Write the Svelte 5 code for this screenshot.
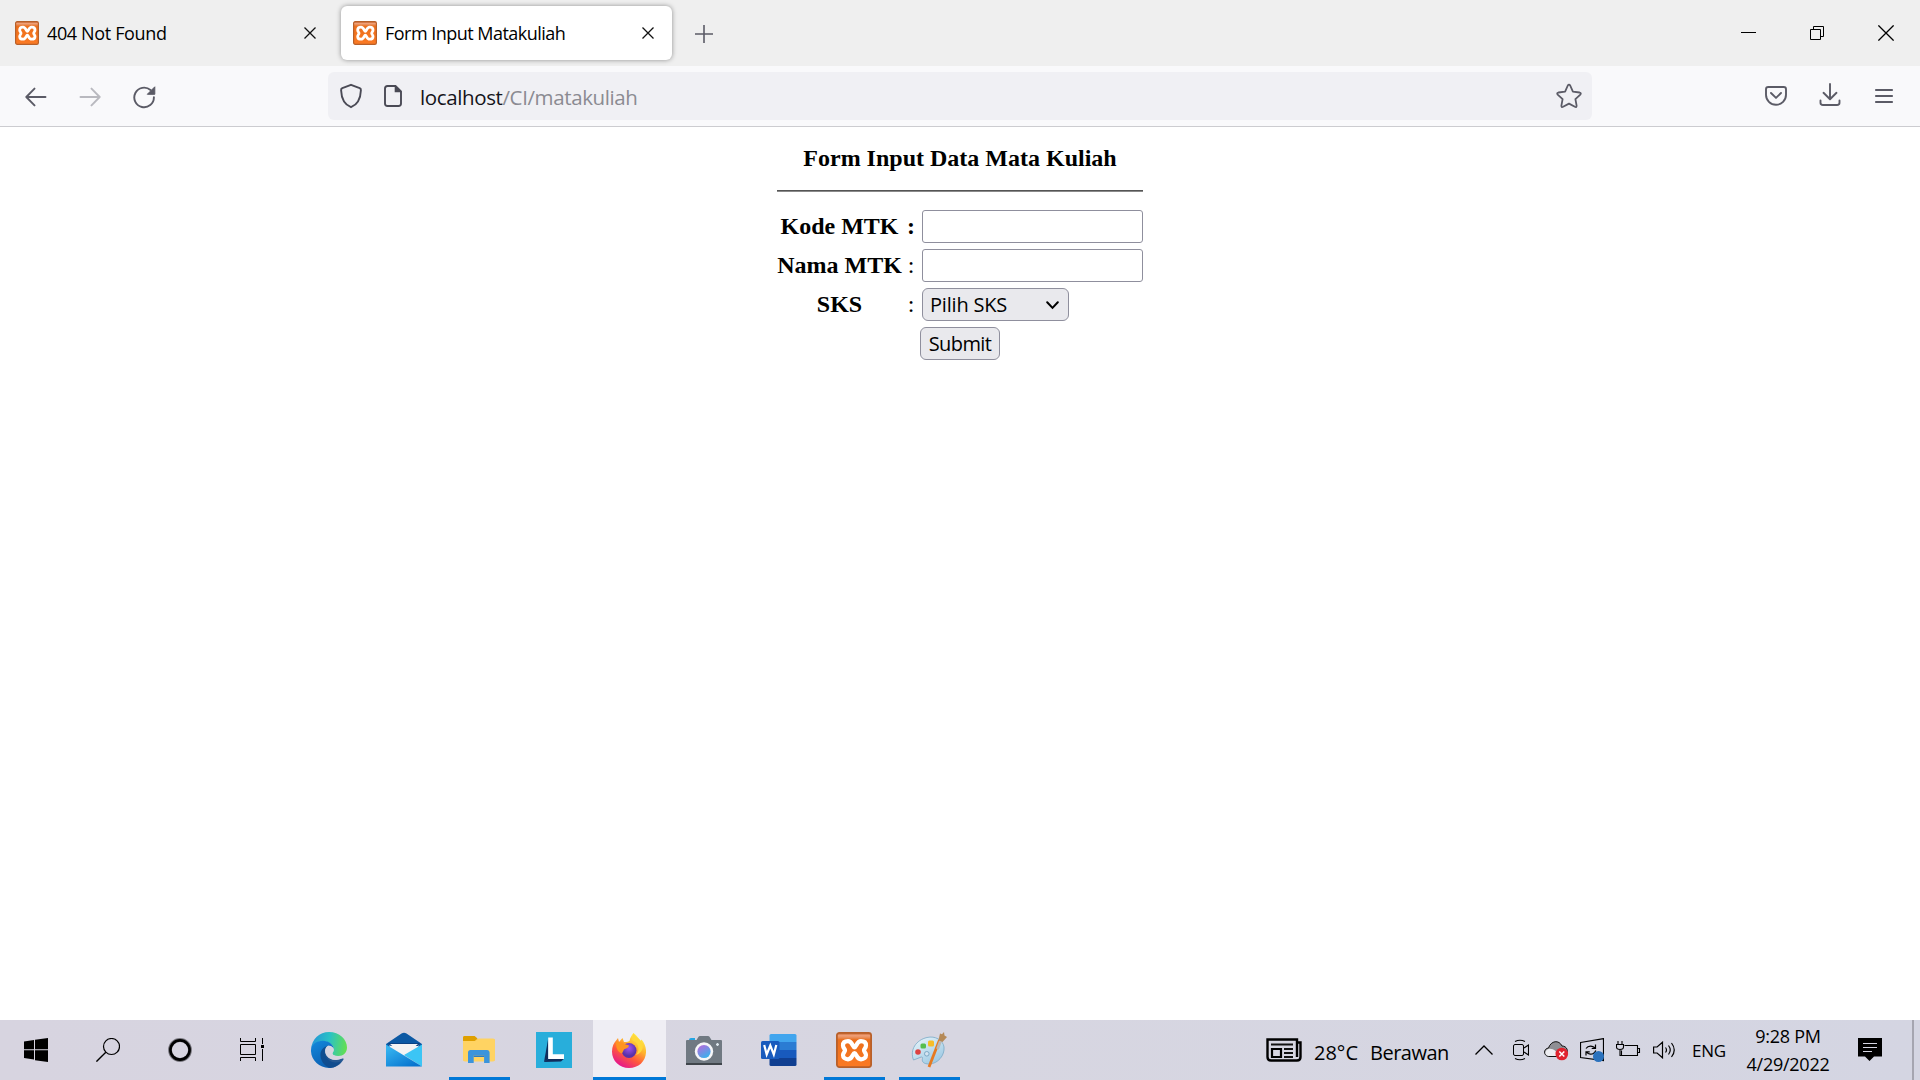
<script>
  let kode = $state('');
  let nama = $state('');
</script>

{#snippet xampp(size, id)}
  <svg width={size} height={size} viewBox="0 0 36 36">
    <defs>
      <linearGradient id={id} x1="0" y1="0" x2="0" y2="1">
        <stop offset="0" stop-color="#c8622a" />
        <stop offset=".08" stop-color="#f0a078" />
        <stop offset=".15" stop-color="#e8884e" />
        <stop offset=".2" stop-color="#ec6f1c" />
        <stop offset="1" stop-color="#fb7a24" />
      </linearGradient>
    </defs>
    <rect x=".9" y=".9" width="34.2" height="34.2" rx="2.5" fill="url(#{id})" stroke="#b8602a" stroke-width="1.8" />
    <path
      d="M18.500 15.400C16.600 15.400 16.500 9.200 12 9.200 8.500 9.200 7 11.200 7 13.500 7 16 9 16.700 9 18.300 9 19.900 7 20.700 7 23.100 7 25.400 8.700 27.300 12 27.300 16.500 27.300 16.600 21.200 18.500 21.200S20.500 27.300 25 27.300C28.300 27.300 30 25.400 30 23.100 30 20.700 28 19.900 28 18.300 28 16.700 30 16 30 13.500 30 11.200 28.500 9.200 25 9.200 20.500 9.200 20.400 15.400 18.500 15.400z"
      fill="none" stroke="#fff" stroke-width="4.200" stroke-linejoin="round" />
  </svg>
{/snippet}

{#snippet cross()}
  <svg width="12" height="12" viewBox="0 0 12 12"><path d="M.5.5l11 11M11.500.5l-11 11" stroke="#111" stroke-width="1.300" /></svg>
{/snippet}

<div class="screen">
  <header class="tabs">
    <div class="tab">
      {@render xampp(24, 'xa')}
      <span class="tab-title first">404 Not Found</span>
      {@render cross()}
    </div>
    <div class="tab active">
      {@render xampp(24, 'xb')}
      <span class="tab-title">Form Input Matakuliah</span>
      {@render cross()}
    </div>
    <svg class="plus" width="18" height="18" viewBox="0 0 18 18"><path d="M9 0v18M0 9h18" stroke="#5b5b66" stroke-width="1.600" /></svg>
    <div class="window-buttons">
      <svg width="16" height="16" viewBox="0 0 16 16"><path d="M0 7.500h15" stroke="#000" /></svg>
      <svg width="14" height="14" viewBox="0 0 14 14"><path d="M.5 3.500h10v10H.5zM3.500 3.500v-3h10v10h-3" fill="none" stroke="#000" /></svg>
      <svg width="16" height="16" viewBox="0 0 16 16"><path d="M.4.4l15.200 15.200M15.600.4L.4 15.600" stroke="#000" stroke-width="1.300" /></svg>
    </div>
  </header>

  <nav class="toolbar">
    <div class="nav-buttons">
      <svg width="22" height="20" viewBox="0 0 22 20"><path d="M20.500 10H1.800M9.500 1.600L1.300 10l8.200 8.400" fill="none" stroke="#5b5b66" stroke-width="1.900" stroke-linecap="round" stroke-linejoin="round" /></svg>
      <svg width="22" height="20" viewBox="0 0 22 20"><path d="M1.500 10h18.700M12.500 1.600l8.200 8.400-8.200 8.400" fill="none" stroke="#b9b9bf" stroke-width="1.900" stroke-linecap="round" stroke-linejoin="round" /></svg>
      <svg width="23" height="24" viewBox="0 0 23 24"><path d="M20.900 12.300A9.800 9.800 0 1 1 17.500 5" fill="none" stroke="#5b5b66" stroke-width="1.900" stroke-linecap="round" /><path d="M21.800 1.800v7.500h-7.500z" fill="#5b5b66" stroke="#5b5b66" stroke-linejoin="round" /></svg>
    </div>
    <div class="urlbar">
      <svg width="24" height="26" viewBox="0 0 24 26"><path d="M12 1.800l8.700 3.400q1.300.5 1.200 2C21.600 15.500 18.500 21.500 12 24.200 5.500 21.500 2.400 15.500 2.100 7.200q-.1-1.500 1.200-2z" fill="none" stroke="#4a4a55" stroke-width="1.900" stroke-linejoin="round" /></svg>
      <svg class="page" width="18" height="22" viewBox="0 0 18 22"><path d="M3.500 1h8L17 6.500v12Q17 21 14.500 21h-11Q1 21 1 18.500v-15Q1 1 3.500 1z" fill="none" stroke="#4a4a55" stroke-width="1.900" /><path d="M10.700.8v6.500h6.500z" fill="#4a4a55" /></svg>
      <span class="url">localhost<span>/CI/matakuliah</span></span>
      <svg width="26" height="26" viewBox="0 0 26 26"><path d="M11.800 2.500q1.200-1.800 2.400 0l2.700 6.100 6.700.9q2 .5.700 2.100l-4.900 4.600 1.200 6.400q.1 2-1.700 1.200L13 20.600l-5.900 3.200q-1.800.8-1.700-1.200l1.200-6.400-4.900-4.600Q.4 10 2.400 9.500l6.700-.9z" fill="none" stroke="#5b5b66" stroke-width="1.800" stroke-linejoin="round" /></svg>
    </div>
    <div class="tools">
      <svg width="22" height="20" viewBox="0 0 22 20"><path d="M3.300 1h15.400Q21 1 21 3.300v5.500a10 10 0 0 1-20 0V3.300Q1 1 3.300 1z" fill="none" stroke="#5b5b66" stroke-width="1.900" /><path d="M6 7l5 4.900L16 7" fill="none" stroke="#5b5b66" stroke-width="1.900" stroke-linecap="round" stroke-linejoin="round" /></svg>
      <svg class="download" width="22" height="24" viewBox="0 0 22 24"><path d="M11 1v15M4.500 9.800L11 16.200l6.500-6.400M1.500 17.500v2.300Q1.500 22 4 22h14q2.500 0 2.500-2.200v-2.300" fill="none" stroke="#5b5b66" stroke-width="1.900" stroke-linecap="round" stroke-linejoin="round" /></svg>
      <svg class="menu" width="18" height="16" viewBox="0 0 18 16"><path d="M.8 2h16.400M.8 8h16.400M.8 14h16.400" stroke="#5b5b66" stroke-width="1.900" stroke-linecap="round" /></svg>
    </div>
  </nav>

  <main>
    <form>
      <h1>Form Input Data Mata Kuliah</h1>
      <hr />
      <div class="fields">
        <b>Kode MTK</b><b class="colon">:</b><input bind:value={kode} aria-label="Kode MTK" />
        <b>Nama MTK</b><span class="colon">:</span><input bind:value={nama} aria-label="Nama MTK" />
        <b>SKS</b><span class="colon">:</span>
        <button type="button" class="select">
          <span>Pilih SKS</span>
          <svg width="13" height="9" viewBox="0 0 13 9"><path d="M1.200 1.300L6.500 6.900l5.300-5.600" fill="none" stroke="#000" stroke-width="2" stroke-linecap="round" /></svg>
        </button>
        <button type="button" class="submit">Submit</button>
      </div>
    </form>
  </main>

  <footer>
    <div class="system">
      <div><svg width="24" height="24" viewBox="0 0 24 24"><path d="M0 3.400l10-1.400v9.200H0zM11 1.800L24 0v11.200H11zM0 12.300h10v9.200L0 20.100zM11 12.300h13V24l-13-1.800z" /></svg></div>
      <div><svg width="24" height="24" viewBox="0 0 24 24"><circle cx="15.500" cy="8.500" r="8" fill="none" stroke="#000" stroke-width="1.200" /><path d="M9.800 14.200L.4 23.600" stroke="#000" stroke-width="1.400" /></svg></div>
      <div><svg width="24" height="24" viewBox="0 0 24 24"><circle cx="12" cy="12" r="10" fill="none" stroke="#77767e" stroke-width="3.800" /><circle cx="12" cy="12" r="9.600" fill="none" stroke="#000" stroke-width="2.600" /></svg></div>
      <div><svg width="24" height="24" viewBox="0 0 24 24"><path d="M.5 0v3.500h15V0M.5 6.500h15v10H.5zM.5 23v-3.500h15V23M22.500 0v6M22.500 11v12" fill="none" stroke="#000" /><path d="M21 7h3v3h-3z" /></svg></div>
    </div>

    <div class="apps">
      <div class="app">
        <svg width="36" height="36" viewBox="0 0 36 36">
          <defs>
            <linearGradient id="e1" x1="0" y1=".4" x2="1" y2=".5"><stop stop-color="#2494d8" /><stop offset=".5" stop-color="#2ac2c4" /><stop offset="1" stop-color="#64df51" /></linearGradient>
            <linearGradient id="e2" x1="0" y1="0" x2=".6" y2="1"><stop stop-color="#1389dd" /><stop offset="1" stop-color="#0b5cae" /></linearGradient>
          </defs>
          <path d="M0 17.500C.8 7 8.500 0 18 0c10.500 0 18 7.500 18 15.500 0 5-3.700 8.500-8.700 8.500-3.800 0-5.800-1.200-5.800-2.500 0-.8 1.300-1.700 1.300-4 0-4.300-4.500-8.200-10.500-8.200C6 9.300 1.500 12.500 0 17.500z" fill="url(#e1)" />
          <path d="M0 18C.3 12.800 5 8.800 11.800 8.800c6.500 0 10.500 3.900 10.900 7.900-1.500-2.200-3.400-2.900-5.100-2.900-3 0-5.300 5.300-2.800 10.200C17.500 29.500 23 32 30 29.500 26.700 34 22.500 36 18 36 8 36-.4 28 0 18z" fill="url(#e2)" />
          <path d="M17.500 13.500C12 15 9 18.700 9.500 24c.5 5.800 5 11.500 11 11.800 5.300-.7 9.500-3.800 12-8.300.4-.9-.3-1.400-1.200-.9-7.600 3.300-15.900.1-17.100-6.400-.4-3.200 1.100-5.400 3.300-6.700z" fill="#114a8b" opacity=".9" />
          <path d="M14.300 19c.2 4 3 7.500 7.300 8.400 3.400.7 7-.1 10.500-1.700l1.900-2.700c-1.800 1-4 1.300-6.700 1.200-4-.1-6-1.400-6-2.700 0-.8 1.300-1.700 1.300-3.500-.2-2.400-2-4.200-4.600-4.200-2.300 0-3.800 2.300-3.700 5.200z" fill="#d7d5e1" />
        </svg>
      </div>
      <div class="app">
        <svg class="up" width="36" height="36" viewBox="0 0 36 36">
          <defs><linearGradient id="m1" x1="0" y1=".2" x2=".7" y2="1"><stop stop-color="#35b4f0" /><stop offset="1" stop-color="#0875cf" /></linearGradient></defs>
          <path d="M0 12L15.500 1.500Q18-.2 20.500 1.500L36 12v4H0z" fill="#0c59a4" /><path d="M3.500 11h29v12h-29z" fill="#f3f3f3" /><path d="M2 11h32l-2 3-28-.2z" fill="#0b4384" /><path d="M4 12h28L18 24z" fill="#f4f4f4" />
          <path d="M36 12.500v22L18 23z" fill="#3cc5f5" /><path d="M0 12.500l36 22H0z" fill="url(#m1)" />
        </svg>
      </div>
      <div class="app running">
        <svg width="32" height="28" viewBox="0 0 32 28">
          <path d="M0 1.500Q0 0 1.500 0h10l3 3H30Q32 3 32 5v18q0 2-2 2H2q-2 0-2-2z" fill="#f5bd3d" /><path d="M0 5h12l3.500-2.500H30Q32 2.500 32 4.500v19q0 2-2 2H2q-2 0-2-2z" fill="#ffd362" /><path d="M0 1.500Q0 0 1.500 0h10l3 2.500L11.500 5H0z" fill="#dfa000" />
          <path d="M5 27V16.500Q5 14 7.500 14h16.800Q26.600 14 26.600 16.500V27h-5.500v-7.500H10.700V27z" fill="#3b94dc" /><path d="M10.700 19.500h10.400V21H10.700z" fill="#2a7bc4" />
        </svg>
      </div>
      <div class="app">
        <svg width="36" height="36" viewBox="0 0 36 36"><path d="M0 0h36v36H0z" fill="#28aedb" /><path d="M12.200 6.500L8 30l4.200-3z" fill="#102d5c" /><path d="M8 30l17-.5 3-2.700H12z" fill="#102d5c" /><path d="M12.200 5.500h4.600v16.800H28V27H12.200z" fill="#fff" /></svg>
      </div>
      <div class="app running current">
        <svg width="34" height="35" viewBox="0 0 34 35">
          <defs>
            <linearGradient id="f1" x1=".8" y1=".05" x2=".25" y2=".95"><stop stop-color="#fff44f" /><stop offset=".35" stop-color="#ffb32b" /><stop offset=".65" stop-color="#ff5a3b" /><stop offset="1" stop-color="#e5168d" /></linearGradient>
            <radialGradient id="f2" cx=".5" cy=".35"><stop stop-color="#a352ef" /><stop offset="1" stop-color="#5a32a8" /></radialGradient>
          </defs>
          <path d="M21.500 0c4 3 5.500 6 7 8l1-1.500c3 3.500 4.800 8 4.500 13C33.500 28.500 26.500 35 17 35 7.500 35 0 28 0 18.500 0 13.500 2 9.500 4.500 7L6 5l1 4 3.500-4 1.500 4c3 0 5-.5 5.500-1C18 4.500 20 2 21.500 0z" fill="url(#f1)" />
          <circle cx="17" cy="17.500" r="7.500" fill="url(#f2)" />
          <path d="M4 9c3-.5 7 .5 8.500 2l4.500 1.500c0 2-3 3-5 4l-2 4C5 19 4 14 4 9z" fill="#ff9420" /><path d="M20 7c6 2 9 9 4 15 8-3 9-11 3-16-3-2-5-4-5.500-6z" fill="#ffd83a" />
        </svg>
      </div>
      <div class="app">
        <svg class="down" width="36" height="30" viewBox="0 0 36 30">
          <defs><linearGradient id="c1" x1=".2" y1="0" x2=".8" y2="1"><stop stop-color="#b56cdd" /><stop offset="1" stop-color="#32b5ed" /></linearGradient></defs>
          <path d="M3 4q0-2 2-2h4v4H3z" fill="#24a5e3" /><path d="M1 4h9.500l2-3.200Q13 0 14 0h8q1 0 1.500.8L25.500 4H35q1 0 1 1v23H0V5q0-1 1-1z" fill="#707982" /><path d="M0 27h36v1.500q0 .5-.5.5H.5q-.5 0-.5-.5z" fill="#3f454b" />
          <circle cx="18" cy="15.500" r="9.200" fill="#f6f6f8" /><circle cx="18" cy="15.500" r="6.600" fill="url(#c1)" /><path d="M31.500 7v3M30 8.500h3" stroke="#dce5ec" stroke-width="1.300" />
        </svg>
      </div>
      <div class="app">
        <svg width="36" height="32" viewBox="0 0 36 32">
          <path d="M8.500 1.500Q8.500 0 10 0h24q1.500 0 1.500 1.500V8h-27z" fill="#41a5ee" /><path d="M8.500 8h27v8h-27z" fill="#2b7cd3" /><path d="M8.500 16h27v8h-27z" fill="#185abd" /><path d="M8.500 24h27v6.500q0 1.500-1.500 1.500H10q-1.500 0-1.500-1.500z" fill="#103f91" />
          <rect y="7" width="18.500" height="18" rx="1.600" fill="#185abd" /><path d="M3.200 11l2.500 9.500 3.600-9 3.500 9 2.500-9.500" fill="none" stroke="#fff" stroke-width="2.200" />
        </svg>
      </div>
      <div class="app running">{@render xampp(36, 'xc')}</div>
      <div class="app running">
        <svg width="36" height="36" viewBox="0 0 36 36">
          <defs><linearGradient id="p1" x1="0" y1="0" x2=".7" y2="1"><stop stop-color="#edf7fb" /><stop offset="1" stop-color="#9dc9e3" /></linearGradient></defs>
          <path d="M16 5.500C24 3.500 32 8 33 15c1 8-6 17-15 17-5 0-7.500-2-6.500-5.500.5-1.500-1-2-2.500-1L2.500 28C-1.500 18 5 8 16 5.500z" fill="url(#p1)" stroke="#79a9c6" stroke-width=".8" />
          <circle cx="7" cy="20" r="2.800" fill="#dc4242" /><rect x="9.500" y="11.500" width="5.500" height="5" rx="1.500" fill="#55be4d" /><rect x="17" y="8.500" width="6" height="6" rx="1.500" fill="#f7bd28" /><circle cx="15.800" cy="21.800" r="2.300" fill="#d6e4f0" stroke="#7ca9c6" />
          <path d="M28.500 8L18 35" stroke="#e57a21" stroke-width="2.800" /><path d="M29.500 9L26.500 17" stroke="#bbb8b4" stroke-width="3" /><path d="M27.500 8L29 1.500l2 .8L33 0l.5 3.500L36 5l-4.500 5z" fill="#b58a58" />
        </svg>
      </div>
    </div>

    <div class="tray">
      <svg width="36" height="24" viewBox="0 0 36 24"><path d="M31 4.500h3.500v14.500q0 3.500-3.500 3.500H5Q1.500 22.500 1.500 19V1.500H31V19" fill="none" stroke="#000" stroke-width="2.400" /><path d="M5 6.500h22M18 11h9M18 15h9M18 19h9" stroke="#111" stroke-width="1.900" /><path d="M6 11h9v8H6z" fill="none" stroke="#000" stroke-width="2.200" /></svg>
      <span class="weather">28°C</span>
      <span class="weather cloudy">Berawan</span>
      <svg width="18" height="10" viewBox="0 0 18 10"><path d="M.5 9.500L9 1l8.500 8.500" fill="none" stroke="#000" stroke-width="1.300" /></svg>
      <svg width="16" height="22" viewBox="0 0 16 22"><path d="M2 2.500Q7 0 12 2.500M2 19.500Q7 22 12 19.500M11 9l4.500-3v10L11 13" fill="none" stroke="#000" stroke-width="1.100" /><rect x=".5" y="5.500" width="10" height="11" rx="1.500" fill="none" stroke="#000" /></svg>
      <svg width="25" height="22" viewBox="0 0 25 22"><path d="M4.500 17.500C-1 16.500-.5 9.500 4.500 9 7 1.500 15 .5 18 7c5 0 6.500 5 4.500 8.500l-5 2z" fill="#8f8f94" stroke="#111" /><path d="M4.500 17C0 16 .5 11 4.500 10c2.500-.5 5 .5 7 2l3.500 5z" fill="#ededf1" /><circle cx="17.800" cy="15" r="6.300" fill="#e0232e" /><path d="M15.300 12.500l5 5M20.300 12.500l-5 5" stroke="#fff" stroke-width="1.500" /></svg>
      <svg width="24" height="24" viewBox="0 0 24 24"><path d="M.5 4.500L23.500.6v21.900L.5 19.500z" fill="none" stroke="#000" stroke-width="1.200" /><path d="M6 10.500q2-3 6-2.200 2 .5 3.300 2M15.500 6.500v4h-3.800M15.800 12.500q-1.800 4-5.600 3.700-2.200-.2-3.700-2M6 17.500v-3.600h3.700" fill="none" stroke="#000" stroke-width="1.200" /><circle cx="18.500" cy="18.500" r="5.500" fill="#2b72bd" /></svg>
      <svg width="25" height="18" viewBox="0 0 25 18"><path d="M8.500 4.500h13v10H5.500v-5M21.500 7.500h2v4h-2M2 0v3M6 0v3M.5 3.500h7V6Q7.500 8.500 4 8.500T.5 6zM4 8.500v6h2" fill="none" stroke="#000" stroke-width="1.100" /></svg>
      <svg width="23" height="18" viewBox="0 0 23 18"><path d="M.6 6h3.500L9.500 1.200v15.600L4.100 12H.6zM12.500 6.500Q14.500 9 12.500 11.500M15.500 4.500Q19 9 15.500 13.500M18.500 2Q24 9 18.500 16" fill="none" stroke="#000" stroke-width="1.200" /></svg>
      <span class="lang">ENG</span>
      <div class="clock"><span>9:28 PM</span><span class="date">4/29/2022</span></div>
      <svg class="notice" width="24" height="24" viewBox="0 0 24 24"><path d="M0 0h24v18.500h-8L11.500 23 7 18.500H0z" /><path d="M5 5.500h14M5 9.500h14M5 13.500h9" stroke="#d5d5e2" /></svg>
      <i class="desktop"></i>
    </div>
  </footer>
</div>

<style>
  :global(body) { margin: 0; overflow: hidden; background: #fff; }
  .screen { width: 1920px; height: 1080px; display: flex; flex-direction: column; font-family: "Open Sans", "Noto Sans", sans-serif; color: #000; }
  svg { display: block; flex: none; }

  .tabs { height: 66px; flex: none; background: #efefef; display: flex; align-items: center; }
  .tab { box-sizing: border-box; height: 54px; width: 332px; margin-left: 3px; padding: 0 19px 0 12px; display: flex; align-items: center; gap: 8px; border-radius: 6px; }
  .tab.active { width: 331px; margin-left: 6px; padding-right: 18px; background: #fff; box-shadow: 0 0 5px rgba(0, 0, 0, .4); }
  .tab-title { flex: 1; font-size: 18px; letter-spacing: -.52px; line-height: 24px; white-space: nowrap; }
  .tab-title.first { letter-spacing: -.36px; }
  .plus { margin: 2px 0 0 23px; }
  .window-buttons { margin-left: auto; margin-right: 26px; display: flex; gap: 54px; align-items: center; }
  .window-buttons svg:nth-child(1) { margin-right: -1px; }

  .toolbar { box-sizing: border-box; height: 61px; flex: none; background: #f9f9fb; border-bottom: 1px solid #ccccd0; display: flex; align-items: center; }
  .nav-buttons { width: 303px; padding-left: 25px; display: flex; align-items: center; gap: 32px; padding-top: 2px; }
  .urlbar { box-sizing: border-box; width: 1264px; height: 48px; background: #f0f0f4; border-radius: 6px; padding: 0 10px 0 11px; display: flex; align-items: center; }
  .page { margin: 0 18px 0 21px; }
  .url { flex: 1; font-size: 20.500px; letter-spacing: -.38px; line-height: 28px; color: #15141a; padding-top: 2px; }
  .url span { color: #8b8b92; }
  .tools { display: flex; align-items: center; margin-left: 173px; }
  .download { margin: 0 34px 2px 32px; }
  .menu { margin-bottom: 1px; }

  main { flex: 1; display: flex; justify-content: center; align-items: flex-start; }
  form { width: 366px; padding-top: 17px; font: 24px/28px "Liberation Serif", serif; }
  h1 { margin: 0; font-size: 24px; line-height: 28px; text-align: center; }
  hr { margin: 18px 0 18px; height: 1px; border: 0; border-top: 1px solid #555; background: #8a8a8a; }
  .fields { display: grid; grid-template-columns: 125px 20px 221px; row-gap: 6px; align-items: center; text-align: center; }
  .fields > b, .fields > span { line-height: 33px; }
  .colon { padding-right: 2px; }
  input, button { box-sizing: border-box; height: 33px; border: 1px solid #8f8f9d; border-radius: 3px; margin: 0; font-family: "Open Sans", sans-serif; font-size: 20px; color: #000; }
  input { width: 221px; background: #fff; outline: 0; }
  button { background: #e9e9ed; border-radius: 6px; line-height: 28px; }
  .select { width: 147px; padding: 0 9px 0 7px; display: flex; align-items: center; justify-content: space-between; letter-spacing: -.2px; }
  .select svg { margin-top: 2px; }
  .submit { grid-column: 3; width: 80px; margin-left: -2px; padding: 0; letter-spacing: -.6px; }

  footer { height: 60px; flex: none; display: flex; background: linear-gradient(90deg, #d7d4e0, #d7d6e1 50%, #d4d5e2); }
  .system { display: flex; }
  .system div { width: 72px; display: flex; align-items: center; justify-content: center; }
  .apps { display: flex; margin-left: 4px; gap: 2px; padding-left: 1px; }
  .app { box-sizing: border-box; position: relative; width: 73px; padding-right: 1px; display: flex; align-items: center; justify-content: center; }
  .app .down { margin-top: 2px; }
  .app .up { margin-bottom: 1px; }
  .running::after { content: ""; position: absolute; bottom: 0; left: 6px; right: 6px; height: 3px; background: #0078d7; }
  .current { background: #efeef4; }
  .current::after { left: 0; right: 0; }
  .tray { margin-left: auto; width: 654px; display: grid; grid-template-columns: 48px 57px 104px 38px 31px 36px 36px 37px 40px 53px 84px 28px 54px 1fr; align-items: center; }
  .notice { grid-column: 13; }
  .weather { font-size: 20px; line-height: 28px; padding-top: 5px; }
  .cloudy { letter-spacing: -.5px; margin-left: -1px; }
  .lang { font-size: 17px; letter-spacing: -.2px; margin-left: -1px; }
  .clock { display: flex; flex-direction: column; align-items: center; font-size: 18px; line-height: 28px; letter-spacing: -.25px; white-space: nowrap; }
  .desktop { height: 60px; border-left: 2px solid #a5a5b0; }
</style>
